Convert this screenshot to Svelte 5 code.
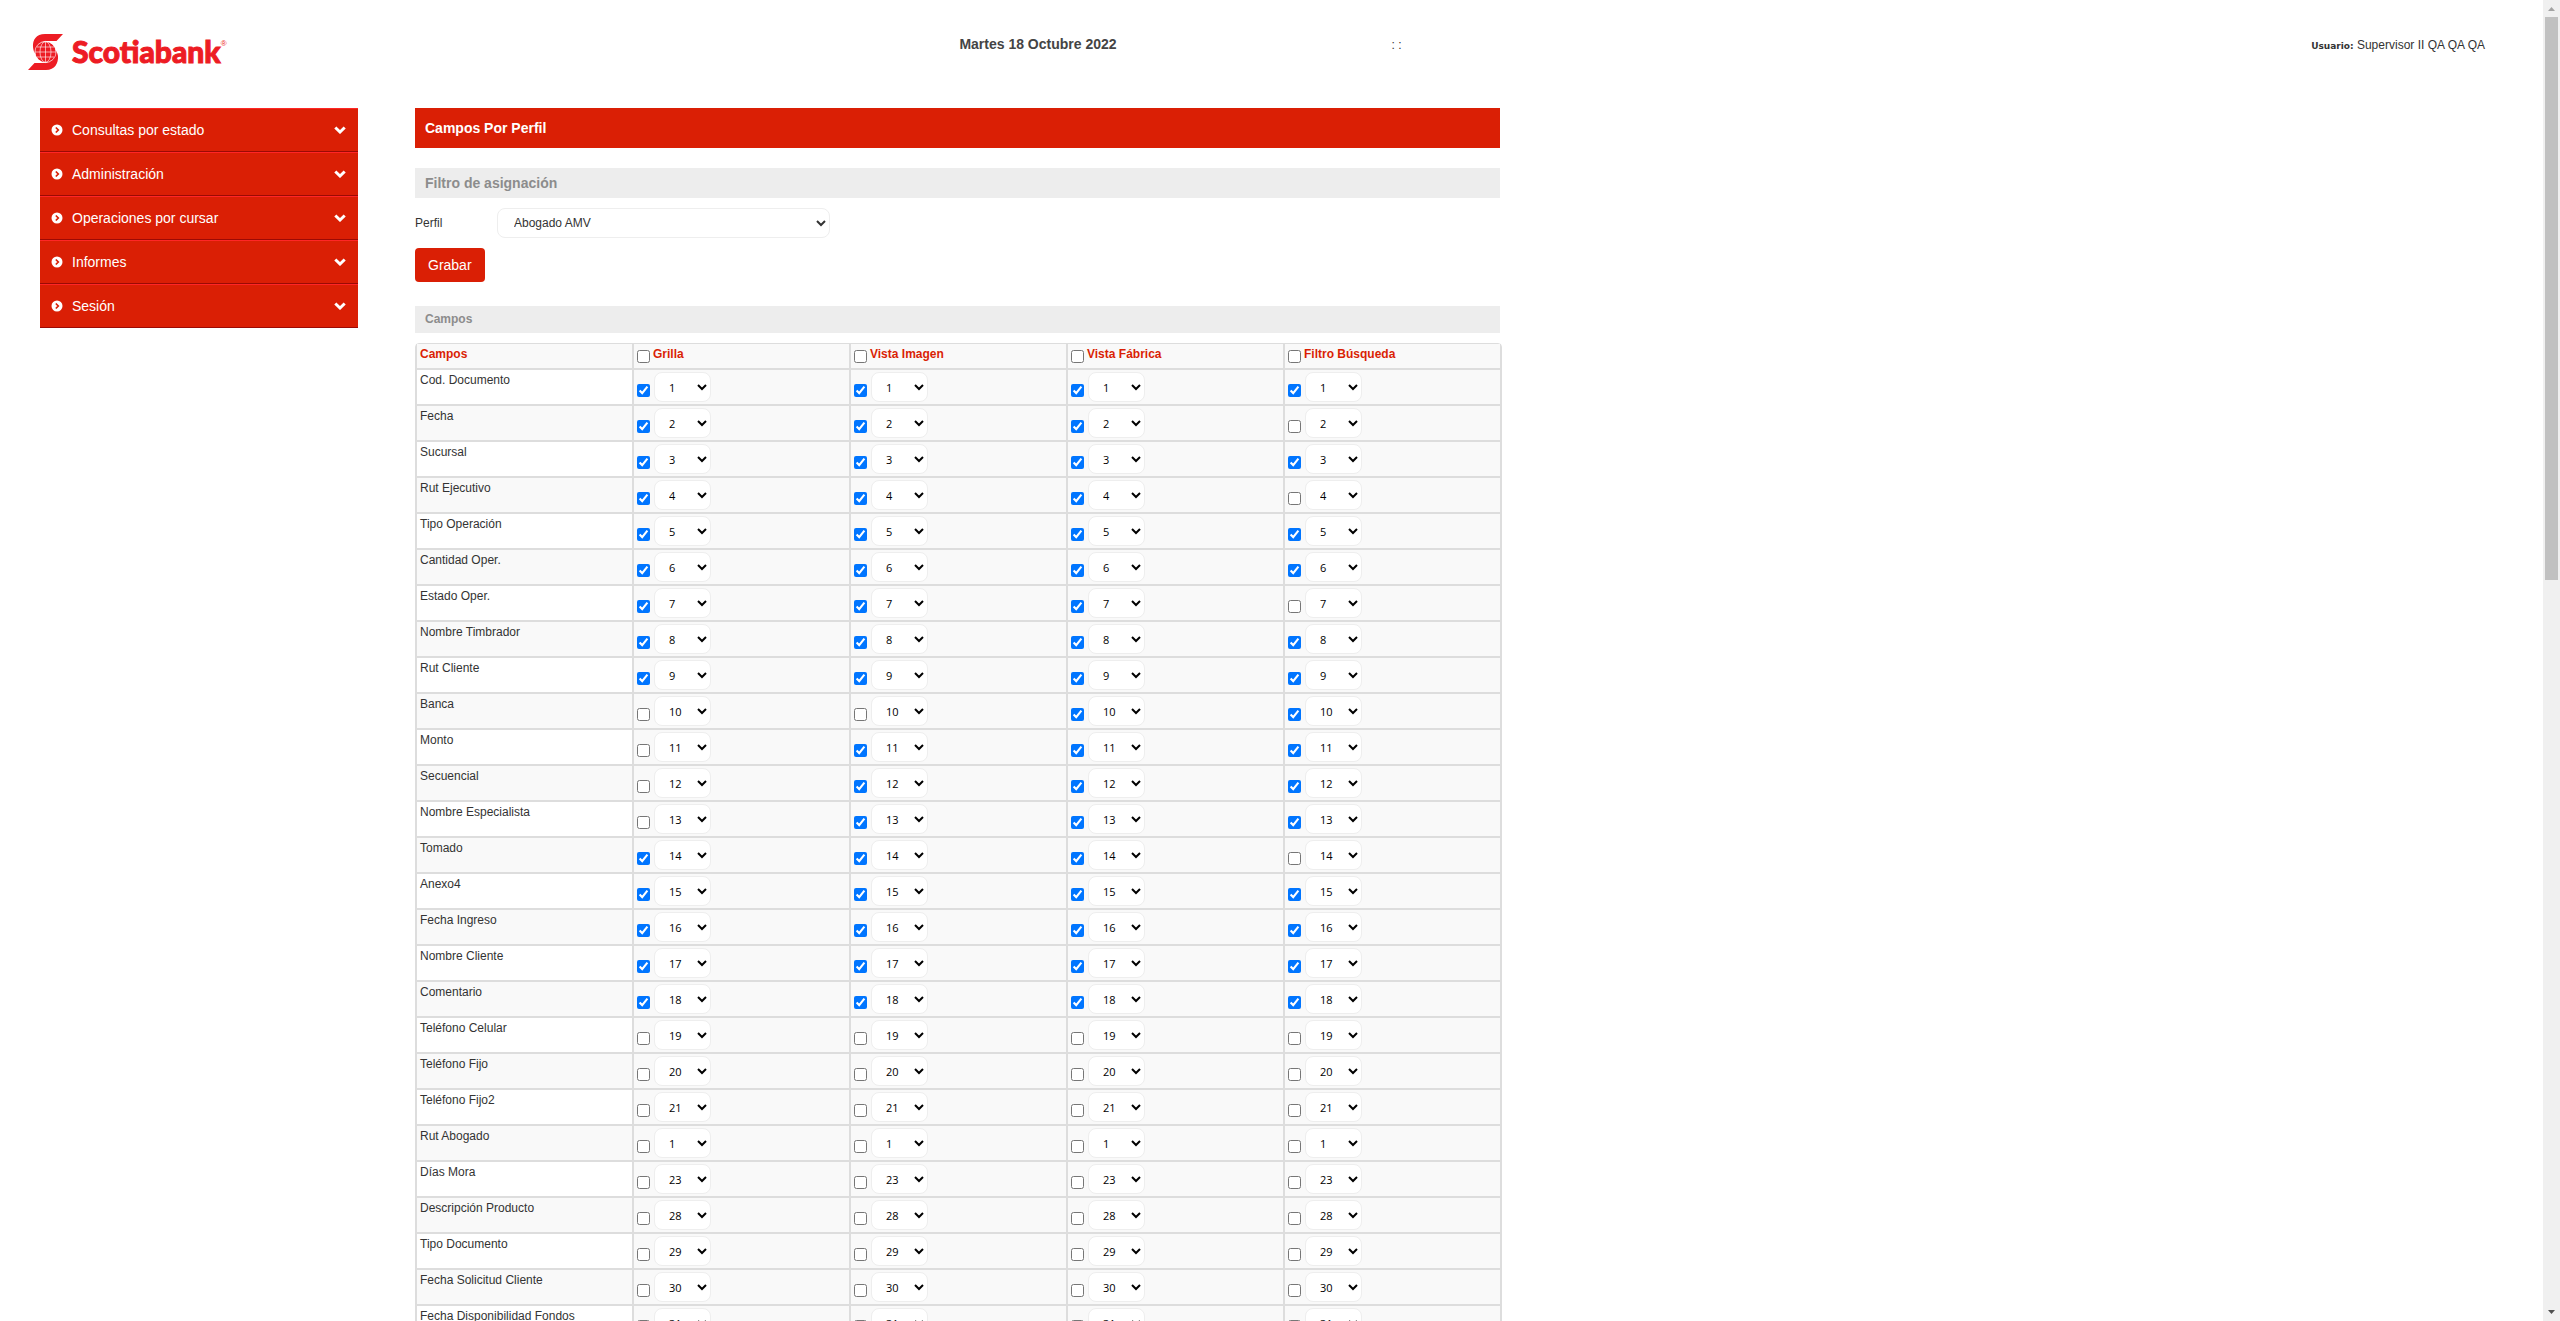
<script>
  const menu = ['Consultas por estado', 'Administración', 'Operaciones por cursar', 'Informes', 'Sesión'];
  const columns = ['Grilla', 'Vista Imagen', 'Vista Fábrica', 'Filtro Búsqueda'];
  const profiles = ['Abogado AMV', 'Supervisor', 'Ejecutivo'];
  const orders = Array.from({ length: 40 }, (_, i) => i + 1);

  // name, position, one flag per column
  const fields = $state(
    [
      ['Cod. Documento', 1, '1111'],
      ['Fecha', 2, '1110'],
      ['Sucursal', 3, '1111'],
      ['Rut Ejecutivo', 4, '1110'],
      ['Tipo Operación', 5, '1111'],
      ['Cantidad Oper.', 6, '1111'],
      ['Estado Oper.', 7, '1110'],
      ['Nombre Timbrador', 8, '1111'],
      ['Rut Cliente', 9, '1111'],
      ['Banca', 10, '0011'],
      ['Monto', 11, '0111'],
      ['Secuencial', 12, '0111'],
      ['Nombre Especialista', 13, '0111'],
      ['Tomado', 14, '1110'],
      ['Anexo4', 15, '1111'],
      ['Fecha Ingreso', 16, '1111'],
      ['Nombre Cliente', 17, '1111'],
      ['Comentario', 18, '1111'],
      ['Teléfono Celular', 19, '0000'],
      ['Teléfono Fijo', 20, '0000'],
      ['Teléfono Fijo2', 21, '0000'],
      ['Rut Abogado', 1, '0000'],
      ['Días Mora', 23, '0000'],
      ['Descripción Producto', 28, '0000'],
      ['Tipo Documento', 29, '0000'],
      ['Fecha Solicitud Cliente', 30, '0000'],
      ['Fecha Disponibilidad Fondos', 31, '0000']
    ].map(([name, order, flags]) => ({
      name,
      cells: [...flags].map((f) => ({ on: f === '1', order }))
    }))
  );

  let profile = $state('Abogado AMV');

  function toggleColumn(index, on) {
    for (const field of fields) field.cells[index].on = on;
  }
</script>

<div class="shell">
  <div class="page">
    <header>
      <a class="logo" href="#inicio" aria-label="Scotiabank">
        <svg viewBox="0 0 35 36" width="35" height="36" aria-hidden="true">
          <path fill="#ed1c24" d="M35 0H17C8 0 4.500 6 5 13C5.300 16 6 18 7.500 20C7 13 12 7 19 7H28.500ZM0 36H18C27 36 30.500 29 30 22C29.700 20 29 18 27.500 16C28 23 23 29 16 29H6.500Z" />
          <circle cx="17.500" cy="18" r="10.300" fill="#ed1c24" />
          <g fill="none" stroke="#fff" stroke-width="0.600">
            <circle cx="17.500" cy="18" r="10.600" />
            <ellipse cx="17.500" cy="18" rx="5.500" ry="10.300" />
            <path d="M17.500 7.700V28.300M7 18H28M9 13H26M9 23H26" />
          </g>
        </svg>
        <span class="brand">Scotiabank</span><span class="mark">®</span>
      </a>
      <strong class="date">Martes 18 Octubre 2022</strong>
      <span class="clock">: :</span>
      <p class="user"><strong>Usuario:</strong> Supervisor II QA QA QA</p>
    </header>

    <div class="body">
      <nav>
        {#each menu as item}
          <button type="button" class="item">
            <svg viewBox="0 0 12 12" width="12" height="12" aria-hidden="true">
              <circle cx="6" cy="6" r="5.500" fill="#fff" />
              <path d="M4.800 3.500L7.300 6L4.800 8.500" fill="none" stroke="#da1f05" stroke-width="1.700" />
            </svg>
            <span>{item}</span>
            <svg viewBox="0 0 12 8" width="12" height="8" aria-hidden="true">
              <path d="M1.300 1.500L6 6L10.700 1.500" fill="none" stroke="#fff" stroke-width="3" />
            </svg>
          </button>
        {/each}
      </nav>

      <main>
        <h1>Campos Por Perfil</h1>
        <h2>Filtro de asignación</h2>
        <div class="filter">
          <label for="perfil">Perfil</label>
          <select id="perfil" bind:value={profile}>
            {#each profiles as p}<option>{p}</option>{/each}
          </select>
        </div>
        <button type="button" class="save">Grabar</button>
        <h3>Campos</h3>

        <table>
          <thead>
            <tr>
              <th scope="col">Campos</th>
              {#each columns as column, i}
                <th scope="col">
                  <label class="all">
                    <input type="checkbox" onchange={(e) => toggleColumn(i, e.currentTarget.checked)} />
                    {column}
                  </label>
                </th>
              {/each}
            </tr>
          </thead>
          <tbody>
            {#each fields as field}
              <tr>
                <td>{field.name}</td>
                {#each field.cells as cell, i}
                  <td>
                    <div class="cell">
                      <input type="checkbox" bind:checked={cell.on} aria-label="{field.name}: {columns[i]}" />
                      <select bind:value={cell.order} aria-label="Orden de {field.name} en {columns[i]}">
                        {#each orders as n}<option value={n}>{n}</option>{/each}
                      </select>
                    </div>
                  </td>
                {/each}
              </tr>
            {/each}
          </tbody>
        </table>
      </main>
    </div>
  </div>

  <div class="scrollbar" aria-hidden="true">
    <svg viewBox="0 0 17 17" width="17" height="17"><path d="M5 11H12L8.500 7Z" fill="#a3a3a3" /></svg>
    <div class="track"><div class="thumb"></div></div>
    <svg viewBox="0 0 17 17" width="17" height="17"><path d="M5 6H12L8.500 10Z" fill="#505050" /></svg>
  </div>
</div>

<style>
  :global(body) {
    background: #fff;
    overflow: hidden;
  }
  .shell {
    display: flex;
    height: 100vh;
    font: 12px/18px 'Liberation Sans', Arial, sans-serif;
    color: #333;
  }
  .page {
    flex: 1;
    min-width: 0;
    overflow: hidden;
  }
  header {
    display: grid;
    grid-template-columns: 931fr 432fr 500fr 593fr;
    align-items: start;
    height: 74px;
    padding: 34px 58px 0 28px;
  }
  .logo {
    display: flex;
    color: #ed1c24;
    text-decoration: none;
  }
  .brand {
    margin-left: 9px;
    font: 900 30px/34px Lato, sans-serif;
    -webkit-text-stroke: 1px #ed1c24;
  }
  .mark {
    font: 8px/20px 'Liberation Sans', sans-serif;
  }
  .date {
    font-size: 14px;
    line-height: 20px;
    color: #444;
  }
  .clock {
    line-height: 22px;
  }
  .user {
    margin: 0;
    line-height: 22px;
    text-align: right;
  }
  .user strong {
    font: 800 9px/22px 'DejaVu Sans', sans-serif;
  }
  .body {
    display: flex;
    align-items: flex-start;
    gap: 57px;
    padding-left: 40px;
  }
  nav {
    flex: 0 0 318px;
  }
  .item {
    display: flex;
    align-items: center;
    gap: 9px;
    width: 100%;
    height: 44px;
    padding: 0 12px 0 11px;
    border: 0;
    border-top: 1px solid #ff2626;
    border-bottom: 1px solid #9c0a05;
    background: #da1f05;
    color: #fff;
    font: 14px/20px 'Liberation Sans', Arial, sans-serif;
    text-align: left;
  }
  .item span {
    flex: 1;
  }
  main {
    flex: 0 1 1085px;
  }
  h1,
  h2,
  h3 {
    margin: 0;
    padding: 0 10px;
    font-size: 14px;
    background: #ededed;
    color: #8c8c8c;
  }
  h1 {
    line-height: 40px;
    background: #da1f05;
    color: #fff;
  }
  h2 {
    margin: 20px 0 10px;
    line-height: 30px;
  }
  h3 {
    margin: 24px 0 10px;
    font-size: 12px;
    line-height: 27px;
  }
  select {
    border: 1px solid #eee;
    border-radius: 8px;
    background-color: #fff;
  }
  .filter {
    display: flex;
    align-items: center;
    margin-bottom: 10px;
  }
  .filter label {
    width: 82px;
  }
  .filter select {
    width: 333px;
    height: 30px;
    padding: 0 5px 0 12px;
    color: #333;
    font: 12px 'Liberation Sans', Arial, sans-serif;
  }
  .save {
    display: block;
    height: 34px;
    padding: 0 13px;
    border: 0;
    border-radius: 4px;
    background: #da1f05;
    color: #fff;
    font: 14px 'Liberation Sans', Arial, sans-serif;
  }
  table {
    width: calc(100% + 2px);
    table-layout: fixed;
    border: 1px solid #ddd;
    border-radius: 4px;
    border-collapse: separate;
    border-spacing: 0;
  }
  th,
  td {
    padding: 0 3px;
    border: 1px solid #ddd;
    background: #f9f9f9;
    text-align: left;
    vertical-align: top;
  }
  th {
    height: 24px;
    border-top: 0;
    line-height: 20px;
    color: #da1f05;
  }
  td {
    height: 34px;
    line-height: 20px;
  }
  tbody tr:nth-child(odd) td:first-child {
    background: #fff;
  }
  input {
    width: 13px;
    height: 13px;
    margin: 0;
  }
  .all {
    display: flex;
    gap: 3px;
  }
  .all input {
    margin-top: 6px;
  }
  .cell {
    display: flex;
    align-items: flex-end;
    gap: 4px;
    padding: 2px 0;
  }
  .cell input {
    margin-bottom: 5px;
  }
  .cell select {
    width: 57px;
    height: 30px;
    padding: 1px 1px 0 10px;
    color: #000;
    font: 11px 'Open Sans', sans-serif;
  }
  .scrollbar {
    display: flex;
    flex-direction: column;
    width: 17px;
    background: #f0f0f0;
  }
  .track {
    flex: 1;
    padding: 0 2px;
  }
  .thumb {
    height: 43.75%;
    background: #c1c1c1;
  }
</style>
